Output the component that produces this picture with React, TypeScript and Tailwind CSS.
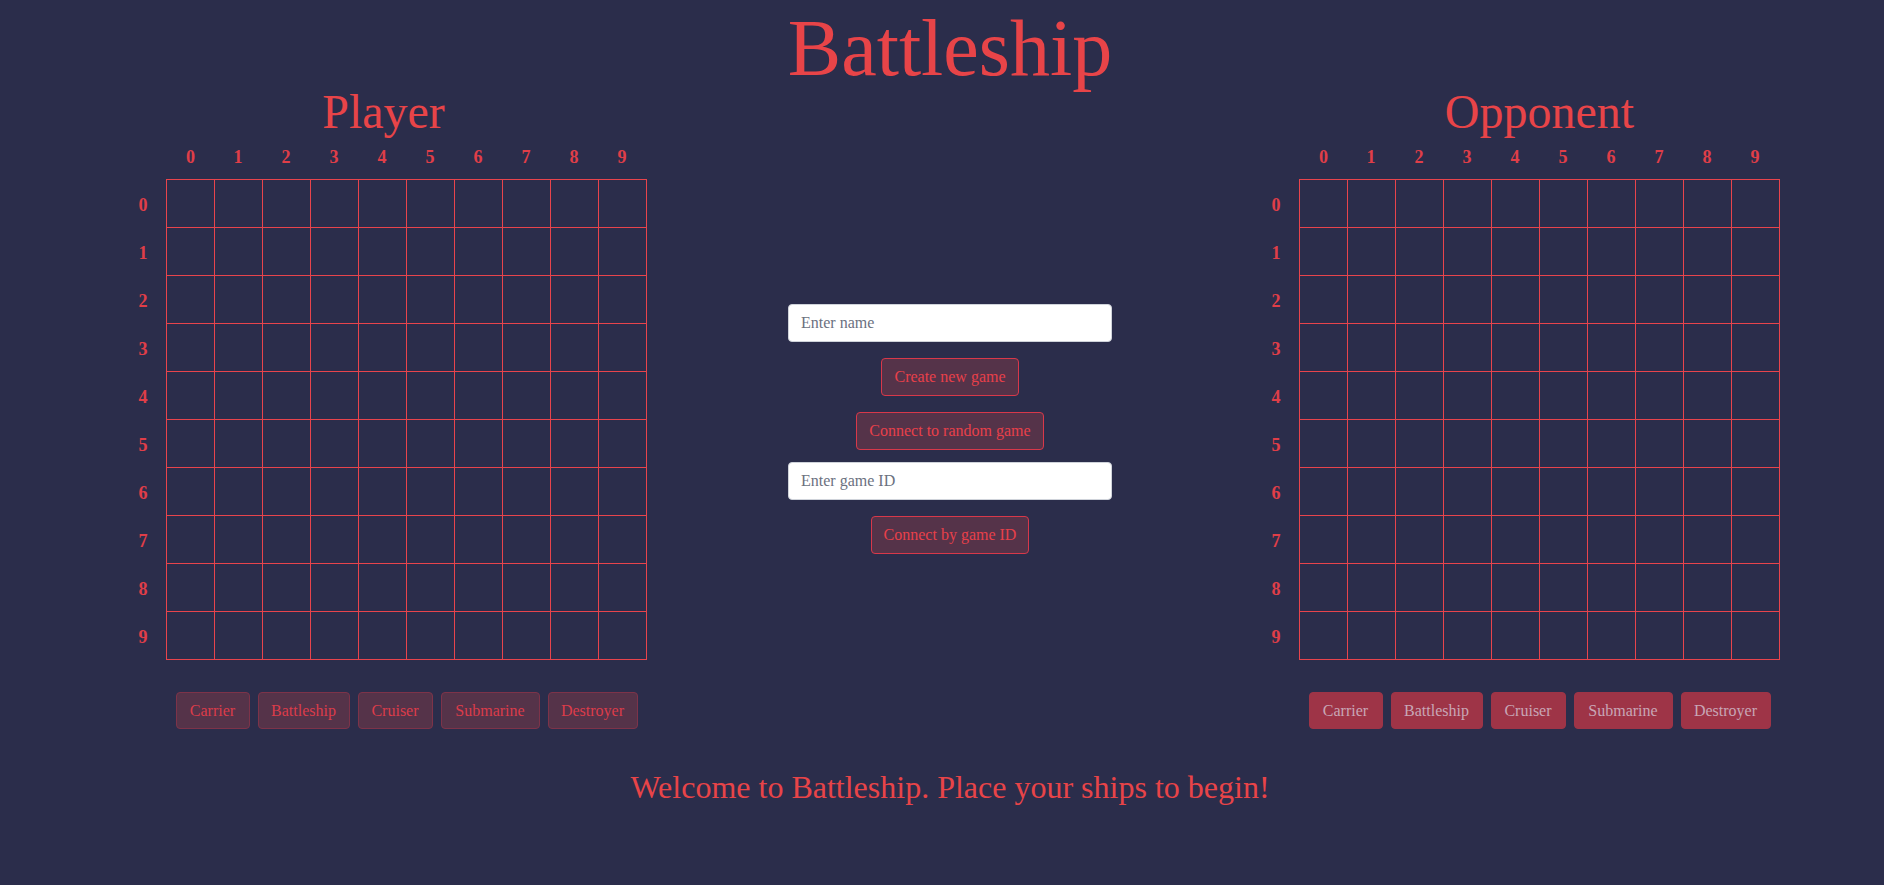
import React from "react";

const nums = [0, 1, 2, 3, 4, 5, 6, 7, 8, 9];
const ships: { name: string; w: string }[] = [
  { name: "Carrier", w: "w-[74px]" },
  { name: "Battleship", w: "w-[92px]" },
  { name: "Cruiser", w: "w-[75px]" },
  { name: "Submarine", w: "w-[99px]" },
  { name: "Destroyer", w: "w-[90px]" },
];

function Board({ title, titleOverGrid, active }: { title: string; titleOverGrid?: boolean; active?: boolean }) {
  return (
    <div className="flex flex-col w-[527px]">
      <div className={`flex ${titleOverGrid ? "pl-[46px]" : ""}`}>
        <h2 className="flex-1 text-center text-[48px] leading-none h-[48px] text-[#e84448]">{title}</h2>
      </div>
      <div className="flex pl-[46px] h-[43px] items-center">
        {nums.map((n) => (
          <div key={n} className={`w-[48px] text-center text-[18px] font-bold text-[#e03e48] ${n === 0 ? "pl-px" : ""}`}>
            {n}
          </div>
        ))}
      </div>
      <div className="flex items-start">
        <div className="w-[46px] flex flex-col pt-px">
          {nums.map((n) => (
            <div key={n} className="h-[48px] flex items-center justify-center pt-[2px] text-[18px] font-bold text-[#e03e48]">
              {n}
            </div>
          ))}
        </div>
        <div className="grid grid-cols-[repeat(10,48px)] border-t border-l border-[#e8444c] w-[481px]">
          {Array.from({ length: 100 }).map((_, i) => (
            <div key={i} className="w-[48px] h-[48px] border-r border-b border-[#e8444c]" />
          ))}
        </div>
      </div>
      <div className="flex pl-[46px] mt-[32px]">
        <div className="flex-1 flex justify-center gap-2">
          {ships.map((s) => (
            <button
              key={s.name}
              className={
                active
                  ? `${s.w} h-[37px] rounded text-[16px] bg-[#9e3447] text-[#c8a6b6] border border-[#9e3447]`
                  : `${s.w} h-[37px] rounded text-[16px] bg-[#553349] text-[#dc3c4a] border border-[#7d3349]`
              }
            >
              {s.name}
            </button>
          ))}
        </div>
      </div>
    </div>
  );
}

function MidButton({ children }: { children: React.ReactNode }) {
  return (
    <button className="h-[38px] px-3 rounded text-[16px] bg-[#553349] text-[#e8404a] border border-[#d8384a]">
      {children}
    </button>
  );
}

export default function App() {
  return (
    <div
      className="min-h-[885px] w-full bg-[#2b2d4b] pl-4 flex flex-col items-center"
      style={{ fontFamily: '"Liberation Serif", "Times New Roman", serif' }}
    >
      <h1 className="mt-[8px] text-[80px] leading-none h-[80px] text-[#e84448]">Battleship</h1>
      <div className="flex justify-center gap-[141px]">
        <Board title="Player" />
        <div className="w-[324px] flex flex-col items-center mt-[216px]">
          <input
            placeholder="Enter name"
            className="w-[324px] h-[38px] rounded bg-white border border-[#cfd3da] px-3 text-[16px] text-gray-800 placeholder:text-[#6b7180] outline-none"
          />
          <div className="mt-4">
            <MidButton>Create new game</MidButton>
          </div>
          <div className="mt-4">
            <MidButton>Connect to random game</MidButton>
          </div>
          <input
            placeholder="Enter game ID"
            className="mt-3 w-[324px] h-[38px] rounded bg-white border border-[#cfd3da] px-3 text-[16px] text-gray-800 placeholder:text-[#6b7180] outline-none"
          />
          <div className="mt-4">
            <MidButton>Connect by game ID</MidButton>
          </div>
        </div>
        <Board title="Opponent" titleOverGrid active />
      </div>
      <p className="mt-[42px] text-[32px] leading-none text-[#e84448]">
        Welcome to Battleship. Place your ships to begin!
      </p>
    </div>
  );
}
